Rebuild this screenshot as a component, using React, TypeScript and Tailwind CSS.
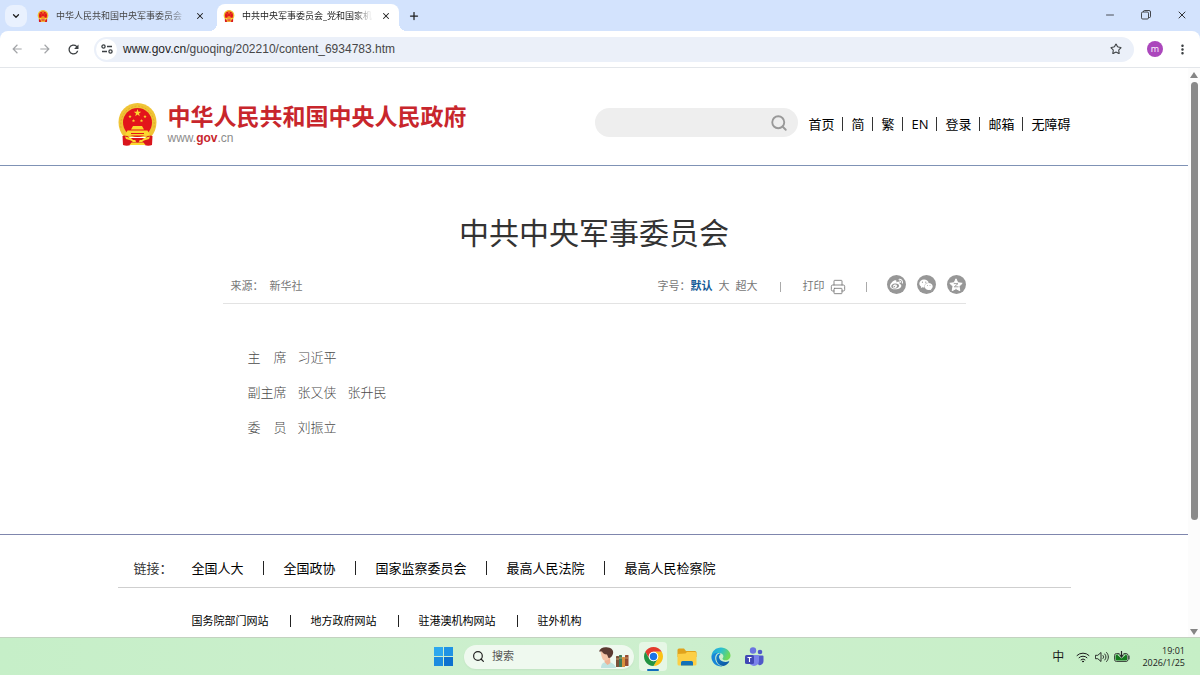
import { ReactNode } from "react";
import { ChevronDown, Minus, Plus, Printer, Search, Star, X } from "lucide-react";
import { FaWeibo, FaWeixin } from "react-icons/fa";
import { MdArrowBack, MdArrowForward, MdMoreVert, MdRefresh } from "react-icons/md";

const NAV = ["首页", "简", "繁", "EN", "登录", "邮箱", "无障碍"];

const ORG_LINKS = ["全国人大", "全国政协", "国家监察委员会", "最高人民法院", "最高人民检察院"];

const SITE_LINKS = ["国务院部门网站", "地方政府网站", "驻港澳机构网站", "驻外机构"];

const MEMBERS = [
  { role: "主　席", names: ["习近平"] },
  { role: "副主席", names: ["张又侠", "张升民"] },
  { role: "委　员", names: ["刘振立"] },
];

function Emblem({ className }: { className: string }) {
  const star = "M0 -3 L.75 -.95 2.85 -.93 1.15 .37 1.76 2.43 0 1.2 -1.76 2.43 -1.15 .37 -2.85 -.93 -.75 -.95Z";
  return (
    <svg viewBox="0 0 39 43" className={className} aria-hidden="true">
      <path
        d="M19.5 0C30 0 38.5 8.500 38.500 19c0 6-2 11-5.500 15H6C2.500 30 .5 25 .5 19 .5 8.500 9 0 19.500 0Z"
        fill="#f0c435"
      />
      <path
        d="M3 25C1.500 14 7.500 4 19.500 3 31.500 4 37.500 14 36 25"
        fill="none"
        stroke="#e0ad2c"
        strokeWidth="1"
        strokeDasharray="2 1.500"
      />
      <circle cx="19.500" cy="19.500" r="14.500" fill="#e3141b" />
      <path d="M4.500 33c3-1.500 6 0 7 2h16c1-2 4-3.500 7-2l-.5 9c-2.500 1-5 1-7.500 0h-14c-2.500 1-5 1-7.500 0Z" fill="#d9151c" />
      <g fill="#fbd92f">
        <path d={star} transform="translate(19.5 10) scale(1.3)" />
        <path d={star} transform="translate(12 13.5) scale(.6)" />
        <path d={star} transform="translate(27 13.5) scale(.6)" />
        <path d={star} transform="translate(15.5 17.8) scale(.6)" />
        <path d={star} transform="translate(23.5 17.8) scale(.6)" />
        <path d="M15 23h9l2 3.500H13Z" />
        <path d="M9.500 27.500h20l2.500 5H7Z" />
        <path d="M7 33.500l6 1.500 2 2h9l2-2 6-1.500-1 2.500-5 1.500-2 1.500H15l-2-1.500-5-1.500Z" />
        <path d="M11.500 42l2-2.500h12l2 2.500Z" />
      </g>
      <path d="M13 30.500h13" stroke="#e3141b" strokeWidth="1" />
      <circle cx="19.500" cy="37.500" r="2" fill="#d9151c" />
    </svg>
  );
}

function Tab({ title, active }: { title: string; active?: boolean }) {
  return (
    <div
      className={
        active
          ? "relative flex h-[27px] w-[182px] items-center rounded-t-lg bg-white pr-2 pb-[3px] pl-1.5"
          : "flex h-[27px] w-[182px] items-center pr-2 pb-[3px] pl-1.5"
      }
    >
      <Emblem className="h-3 w-3 shrink-0" />
      <span
        className={
          active
            ? "ml-[7px] flex-1 overflow-hidden mask-r-from-85% text-[9px] whitespace-nowrap text-[#1f1f1f]"
            : "ml-[7px] flex-1 overflow-hidden mask-r-from-85% text-[9px] whitespace-nowrap text-[#474747]"
        }
      >
        {title}
      </span>
      <button aria-label="关闭标签页" className="ml-2 shrink-0">
        <X className="h-[10px] w-[10px] text-[#1f1f1f]" strokeWidth={2.5} />
      </button>
      {active && (
        <>
          <i className="absolute bottom-0 -left-2 h-2 w-2 bg-[radial-gradient(circle_at_0_0,#d3e3fd_8px,white_8px)]" />
          <i className="absolute -right-2 bottom-0 h-2 w-2 bg-[radial-gradient(circle_at_100%_0,#d3e3fd_8px,white_8px)]" />
        </>
      )}
    </div>
  );
}

function BrowserBar() {
  return (
    <div className="bg-[#d3e3fd]">
      <div className="flex h-[31px] items-end">
        <button
          aria-label="搜索标签页"
          className="mb-1 ml-[5px] flex h-[22px] w-[22px] items-center justify-center rounded-lg bg-[#e9f1fe]"
        >
          <ChevronDown className="h-[10px] w-[10px] text-[#1f1f1f]" strokeWidth={3} />
        </button>
        <div className="flex gap-1 pl-1">
          <Tab title="中华人民共和国中央军事委员会" />
          <Tab title="中共中央军事委员会_党和国家机" active />
        </div>
        <button aria-label="新标签页" className="mb-[9px] ml-[9px]">
          <Plus className="h-3 w-3 text-[#1f1f1f]" strokeWidth={2.5} />
        </button>
        <div className="mr-3 mb-[10px] ml-auto flex items-center gap-[25px] text-[#1f1f1f]">
          <button aria-label="最小化">
            <Minus className="h-3 w-3" strokeWidth={1.5} />
          </button>
          <button aria-label="还原">
            <svg viewBox="0 0 10 10" className="h-[10px] w-[10px]" fill="none" stroke="currentColor" strokeWidth=".8">
              <rect x=".5" y="2" width="7" height="7" rx="1.200" />
              <path d="M2.500 2V1.500a1 1 0 0 1 1-1H8a1.500 1.500 0 0 1 1.500 1.500v4.500a1 1 0 0 1-1 1H7.500" />
            </svg>
          </button>
          <button aria-label="关闭">
            <X className="h-3 w-3" strokeWidth={1.8} />
          </button>
        </div>
      </div>
      <div className="flex h-[37px] items-center rounded-t-lg border-b border-[#e3e6ea] bg-white pr-2.5 pl-[10px]">
        <div className="flex items-center gap-[14px]">
          <button aria-label="后退">
            <MdArrowBack className="h-[14px] w-[14px] text-[#a3a5a8]" />
          </button>
          <button aria-label="前进">
            <MdArrowForward className="h-[14px] w-[14px] text-[#a3a5a8]" />
          </button>
          <button aria-label="重新加载">
            <MdRefresh className="h-[15px] w-[15px] text-[#3c4043]" />
          </button>
        </div>
        <div className="ml-[13px] flex h-[25px] flex-1 items-center rounded-full bg-[#ebf0f9] pr-3 pl-[2px]">
          <span className="flex h-[21px] w-[21px] shrink-0 items-center justify-center rounded-full bg-white">
            <svg viewBox="0 0 12 10" className="h-[10px] w-3" fill="none" stroke="#3c4043" strokeWidth="1.300">
              <circle cx="2.500" cy="2.500" r="1.600" />
              <path d="M6 2.500h5M1 7.500h5" />
              <circle cx="9.500" cy="7.500" r="1.600" />
            </svg>
          </span>
          <div
            aria-label="网址"
            className="ml-[6px] flex-1 font-['Liberation_Sans',sans-serif] text-[12px] text-[#474747]"
          >
            <span className="text-[#1f1f1f]">www.gov.cn</span>/guoqing/202210/content_6934783.htm
          </div>
          <button aria-label="收藏">
            <Star className="h-3 w-3 text-[#3c4043]" strokeWidth={2.2} />
          </button>
        </div>
        <span className="mr-3 ml-[13px] flex h-4 w-4 items-center justify-center rounded-full bg-[#ab47bc] pb-px text-[9px] text-white">
          m
        </span>
        <button aria-label="菜单">
          <MdMoreVert className="h-[15px] w-[15px] text-[#3c4043]" />
        </button>
      </div>
    </div>
  );
}

function SiteHeader() {
  return (
    <header className="border-b border-[#7f92b5]">
      <div className="mx-auto flex max-w-[953px] items-center pt-[35px] pb-[19px]">
        <a href="#" className="flex items-center gap-[11px]">
          <Emblem className="h-[43px] w-[39px]" />
          <span>
            <span className="block text-[23px] leading-[27px] font-bold text-[#c8262c]">
              中华人民共和国中央人民政府
            </span>
            <span className="block font-['Liberation_Sans',sans-serif] text-[12px] leading-4 text-[#8c8c8c]">
              www.<b className="text-[#c8262c]">gov</b>.cn
            </span>
          </span>
        </a>
        <form className="mb-1 ml-auto flex h-[29px] w-[203px] items-center rounded-full bg-[#eeeeee] pr-[10px] pl-4">
          <input aria-label="搜索" className="min-w-0 flex-1 bg-transparent text-[13px] outline-none" />
          <button aria-label="搜索" type="button">
            <Search className="h-[18px] w-[18px] text-[#999999]" strokeWidth={2.5} />
          </button>
        </form>
        <nav className="mb-[2px] ml-[10px] flex items-center text-[13px] leading-5 text-black">
          {NAV.map((item, i) => (
            <span key={item} className="flex items-center">
              {i > 0 && <i className="mx-2 h-[14px] w-px bg-[#333]" />}
              <a href="#">{item}</a>
            </span>
          ))}
        </nav>
      </div>
    </header>
  );
}

function ShareButton({ label, children }: { label: string; children: ReactNode }) {
  return (
    <button
      aria-label={label}
      className="flex h-[19px] w-[19px] items-center justify-center rounded-full bg-[#979797] text-white"
    >
      {children}
    </button>
  );
}

function Article() {
  return (
    <article className="mx-auto max-w-[743px] pt-[47px] pb-[89px]">
      <h1 className="text-center text-[30px] leading-10 text-[#333]">中共中央军事委员会</h1>
      <div className="mt-[15px] flex h-9 items-center border-b border-[#e3e3e3] pl-2 text-[11px] text-[#777]">
        <span className="pt-[2px]">来源：</span>
        <span className="ml-[6px] pt-[2px]">新华社</span>
        <div className="ml-auto flex items-center">
          <div className="flex items-center pt-[2px]">
            <span>字号：</span>
            <button className="mr-[6px] font-bold text-[#135a96]">默认</button>
            <button className="mr-[6px]">大</button>
            <button>超大</button>
            <i className="mx-[22px] h-[10px] w-px bg-[#aaa]" />
            <button className="flex items-center gap-[5px]">
              打印
              <Printer className="h-4 w-4 text-[#777]" strokeWidth={1.3} />
            </button>
            <i className="mx-5 h-[10px] w-px bg-[#aaa]" />
          </div>
          <div className="flex gap-[11px] pb-[2px]">
            <ShareButton label="微博">
              <FaWeibo className="h-[13px] w-[13px]" />
            </ShareButton>
            <ShareButton label="微信">
              <FaWeixin className="h-[14px] w-[14px]" />
            </ShareButton>
            <ShareButton label="QQ空间">
              <svg viewBox="0 0 14 14" className="h-[14px] w-[14px]">
                <path
                  d="M7 .8l1.800 4 4.400.5-3.200 3 .8 4.400L7 10.600l-3.800 2.100.8-4.400-3.200-3 4.400-.5Z"
                  fill="currentColor"
                  stroke="currentColor"
                  strokeLinejoin="round"
                />
                <path d="M4.800 5.600h4.200L5.300 8.800h4.200" fill="none" stroke="#979797" strokeWidth=".9" />
              </svg>
            </ShareButton>
          </div>
        </div>
      </div>
      <div className="pt-9 pl-[25px] text-[13px] leading-[35px] font-light text-[#4a4a4a]">
        {MEMBERS.map((m) => (
          <p key={m.role} className="flex gap-[11px]">
            <span>{m.role}</span>
            {m.names.map((name) => (
              <span key={name}>{name}</span>
            ))}
          </p>
        ))}
      </div>
    </article>
  );
}

function SiteFooter() {
  return (
    <footer className="border-t border-[#7f86ad]">
      <div className="mx-auto max-w-[953px] leading-6 text-black">
        <div className="flex border-b border-[#cfcfcf] pt-[21px] pb-[7px] pl-4 text-[13px]">
          <span className="w-[58px] shrink-0 text-[#333]">链接：</span>
          {ORG_LINKS.map((link, i) => (
            <span key={link} className="flex items-center">
              {i > 0 && <i className="mr-5 ml-[19px] h-[14px] w-px bg-[#222]" />}
              <a href="#">{link}</a>
            </span>
          ))}
        </div>
        <div className="flex pt-[21px] pb-1 pl-[74px] text-[11px]">
          {SITE_LINKS.map((link, i) => (
            <span key={link} className="flex items-center">
              {i > 0 && <i className="mr-5 ml-[21px] h-3 w-px bg-[#222]" />}
              <a href="#">{link}</a>
            </span>
          ))}
        </div>
      </div>
    </footer>
  );
}

function Scrollbar() {
  return (
    <div className="flex w-3 shrink-0 flex-col items-center bg-[#fcfcfc]">
      <svg viewBox="0 0 8 6" className="mt-1 h-[6px] w-2">
        <path d="M4 0l4 6H0Z" fill="#858585" />
      </svg>
      <div className="mt-1 flex w-[7px] flex-1 flex-col">
        <i className="h-4/5 rounded-full bg-[#8a8a8a]" />
      </div>
      <svg viewBox="0 0 8 6" className="mb-[2px] h-[6px] w-2">
        <path d="M4 6L0 0h8Z" fill="#858585" />
      </svg>
    </div>
  );
}

function ChromeLogo() {
  return (
    <svg viewBox="4 4 40 40" className="h-[19px] w-[19px]">
      <path d="M6.680 14A20 20 0 0 1 41.320 14L24 14A10 10 0 0 0 15.340 29Z" fill="#e33b2e" />
      <path d="M41.320 14A20 20 0 0 1 24 44L32.660 29A10 10 0 0 0 24 14Z" fill="#fbc116" />
      <path d="M24 44A20 20 0 0 1 6.680 14L15.340 29A10 10 0 0 0 32.660 29Z" fill="#229342" />
      <circle cx="24" cy="24" r="10" fill="#fff" />
      <circle cx="24" cy="24" r="7.800" fill="#1a73e8" />
    </svg>
  );
}

function EdgeLogo() {
  return (
    <svg viewBox="0 0 20 20" className="h-5 w-5">
      <defs>
        <linearGradient id="edgeTop" x1="0" y1="0" x2="1" y2=".4">
          <stop offset="0" stopColor="#1b9de2" />
          <stop offset=".5" stopColor="#2cc0cf" />
          <stop offset="1" stopColor="#6fd957" />
        </linearGradient>
        <linearGradient id="edgeBase" x1="0" y1="0" x2=".6" y2="1">
          <stop offset="0" stopColor="#1787d9" />
          <stop offset="1" stopColor="#0c59a4" />
        </linearGradient>
      </defs>
      <path d="M.5 9C1 4 5 .5 10 .5c5.500 0 9.500 4 9.500 8 0 3-2.200 4.800-5 4.800-2 0-3-.8-3-1.600 0-.6.9-1 .9-2.500C12.400 7.500 10.500 6 8 6 4.500 6 1.500 7.500.5 9Z" fill="url(#edgeTop)" />
      <path d="M.5 9c1-2 4-3.500 7-3.200C5 7 4.200 9 4.200 11c0 4 3 7.500 7.500 8.300A9.500 9.500 0 0 1 .5 9Z" fill="#1786d8" />
      <path d="M8.500 6.200C6 7 5 9.500 5.300 12c.5 4 3.500 7 7 7 2.500-.5 4.700-2 5.900-4.200.3-.5-.2-.7-.6-.5-1 .5-2 .7-3.100.7-3.500 0-6.500-2.200-6.500-5.200 0-1.200.8-2.300 1.800-2.800Z" fill="url(#edgeBase)" />
    </svg>
  );
}

function Taskbar() {
  return (
    <footer className="grid h-[38px] grid-cols-[1fr_auto_1fr] items-center border-t border-[#c3d2c0] bg-linear-to-r from-[#c6efc8] via-[#cdefce] to-[#c6efc6]">
      <div className="col-start-2 flex items-center">
        <button aria-label="开始" className="grid grid-cols-2 gap-px">
          <i className="h-[9px] w-[9px] bg-[#2da8ee]" />
          <i className="h-[9px] w-[9px] bg-[#1f93e4]" />
          <i className="h-[9px] w-[9px] bg-[#1c8ce0]" />
          <i className="h-[9px] w-[9px] bg-[#0d71cf]" />
        </button>
        <label className="ml-[11px] flex h-6 w-[170px] items-center rounded-full bg-[#eff9ef] pr-1 pl-2 shadow-xs">
          <Search className="h-[13px] w-[13px] shrink-0 text-[#222]" strokeWidth={2.2} />
          <input
            aria-label="搜索"
            placeholder="搜索"
            className="ml-[7px] min-w-0 flex-1 bg-transparent text-[11px] outline-none placeholder:text-[#555]"
          />
          <svg viewBox="0 0 32 22" className="h-[22px] w-8 shrink-0">
            <path d="M3 22c0-4 2-6 6-6s8 2 9 6Z" fill="#bfe3df" />
            <path d="M7 11l5 1 .5 5-3 2-3-3Z" fill="#efb394" />
            <path d="M2.500 6c2-3 8-3 9 1l-.5 6c-2 2-5 2-6.500 0l-1-3Z" fill="#f3c3a6" />
            <path d="M1 5.500C2 1.500 6.500.5 10 1.500c4 0 6.500 4 4.500 7.500-1 2-2.500 3.500-4 3L9 8.500C6 8.500 4.500 7 4 5.500Z" fill="#5b3a31" />
            <rect x="18" y="10" width="3" height="11" rx=".5" fill="#7c5139" />
            <rect x="21" y="9" width="3" height="12" rx=".5" fill="#3e7a59" />
            <rect x="24" y="11" width="3" height="10" rx=".5" fill="#d9913e" />
            <rect x="27" y="9" width="3.500" height="11" rx=".5" fill="#964b32" />
            <path d="M18 13h3M21 12h3M27 12h3" stroke="#e5c27a" strokeWidth=".7" />
          </svg>
        </label>
        <button
          aria-label="Chrome"
          className="ml-[5px] flex h-[29px] w-7 flex-col items-center justify-end gap-[3px] rounded bg-[#e6f7e6]"
        >
          <ChromeLogo />
          <i className="h-[2px] w-3 rounded-full bg-[#0f6cbd]" />
        </button>
        <button aria-label="文件资源管理器" className="ml-[10px]">
          <svg viewBox="0 0 20 18" className="h-[18px] w-5">
            <path d="M.5 2a1.500 1.500 0 0 1 1.500-1.500h5L9 3h9a1.500 1.500 0 0 1 1.500 1.500V9H.5Z" fill="#e0a21c" />
            <path d="M.5 6l8-.5 1.500-1.500h8a1.500 1.500 0 0 1 1.500 1.500v10.500a1.500 1.500 0 0 1-1.500 1.500H2A1.500 1.500 0 0 1 .5 16Z" fill="#fccf45" />
            <path d="M4 17.500v-3A1.500 1.500 0 0 1 5.500 13h9a1.500 1.500 0 0 1 1.500 1.500v3Z" fill="#1272b8" />
          </svg>
        </button>
        <button aria-label="Edge" className="ml-[14px]">
          <EdgeLogo />
        </button>
        <button aria-label="Teams" className="mr-[2px] ml-[14px]">
          <svg viewBox="0 0 19 19" className="h-[19px] w-[19px]">
            <circle cx="8" cy="3.500" r="3.200" fill="#6b74e0" />
            <circle cx="15" cy="5" r="2.300" fill="#5059c9" />
            <path d="M11 8.500h6.500a1 1 0 0 1 1 1V14a4 4 0 0 1-5 4Z" fill="#5059c9" />
            <path d="M4 8h9a1 1 0 0 1 1 1v5a5 5 0 0 1-10 0Z" fill="#7b83eb" />
            <rect y="8" width="9" height="9" rx="1.500" fill="#4148b5" />
            <path d="M2.500 10.500h4M4.500 10.500v4.500" stroke="#fff" strokeWidth="1.100" />
          </svg>
        </button>
      </div>
      <div className="flex items-center justify-end pr-[15px] text-[#1b1b1b]">
        <span className="text-[12px]">中</span>
        <svg viewBox="0 0 14 12" className="ml-3 h-3 w-[14px]" fill="none" stroke="currentColor" strokeLinecap="round">
          <path d="M1 4.500a8.500 8.500 0 0 1 12 0M3 6.700a5.700 5.700 0 0 1 8 0M5 8.800a2.900 2.900 0 0 1 4 0" />
          <circle cx="7" cy="10.500" r=".5" fill="currentColor" />
        </svg>
        <svg viewBox="0 0 14 12" className="ml-[5px] h-3 w-[14px]" fill="none" stroke="currentColor" strokeWidth=".9" strokeLinecap="round" strokeLinejoin="round">
          <path d="M.8 4.300h2L6 1.500v9L2.800 7.700h-2ZM8 4.500c.8.900.8 2.100 0 3M9.800 3c1.600 1.700 1.600 4.300 0 6M11.600 1.500c2.400 2.600 2.400 6.400 0 9" />
        </svg>
        <svg viewBox="0 0 16 11" className="ml-[5px] h-[11px] w-4">
          <rect x=".5" y="2.500" width="13.500" height="8" rx="2" fill="#cdefce" stroke="#222" strokeWidth=".8" />
          <rect x="1.500" y="3.500" width="11.500" height="6" rx="1.200" fill="#147a1d" />
          <path d="M15 5v3" stroke="#222" strokeLinecap="round" />
          <path d="M5.500 0h4v4h2l-4 3.500L3.500 4h2Z" fill="#cdefce" />
          <path d="M7.500 0v5M5.500 3.500L7.500 6l2-2.500" fill="none" stroke="#222" strokeWidth="1.200" />
        </svg>
        <time className="ml-3 text-right text-[9px] leading-3">
          <span className="block">19:01</span>
          <span className="block">2026/1/25</span>
        </time>
      </div>
    </footer>
  );
}

export default function App() {
  return (
    <div className="flex min-h-screen flex-col bg-white font-['Open_Sans','Noto_Sans_CJK_SC',sans-serif]">
      <BrowserBar />
      <div className="flex flex-1">
        <main className="min-w-0 flex-1">
          <SiteHeader />
          <Article />
          <SiteFooter />
        </main>
        <Scrollbar />
      </div>
      <Taskbar />
    </div>
  );
}
